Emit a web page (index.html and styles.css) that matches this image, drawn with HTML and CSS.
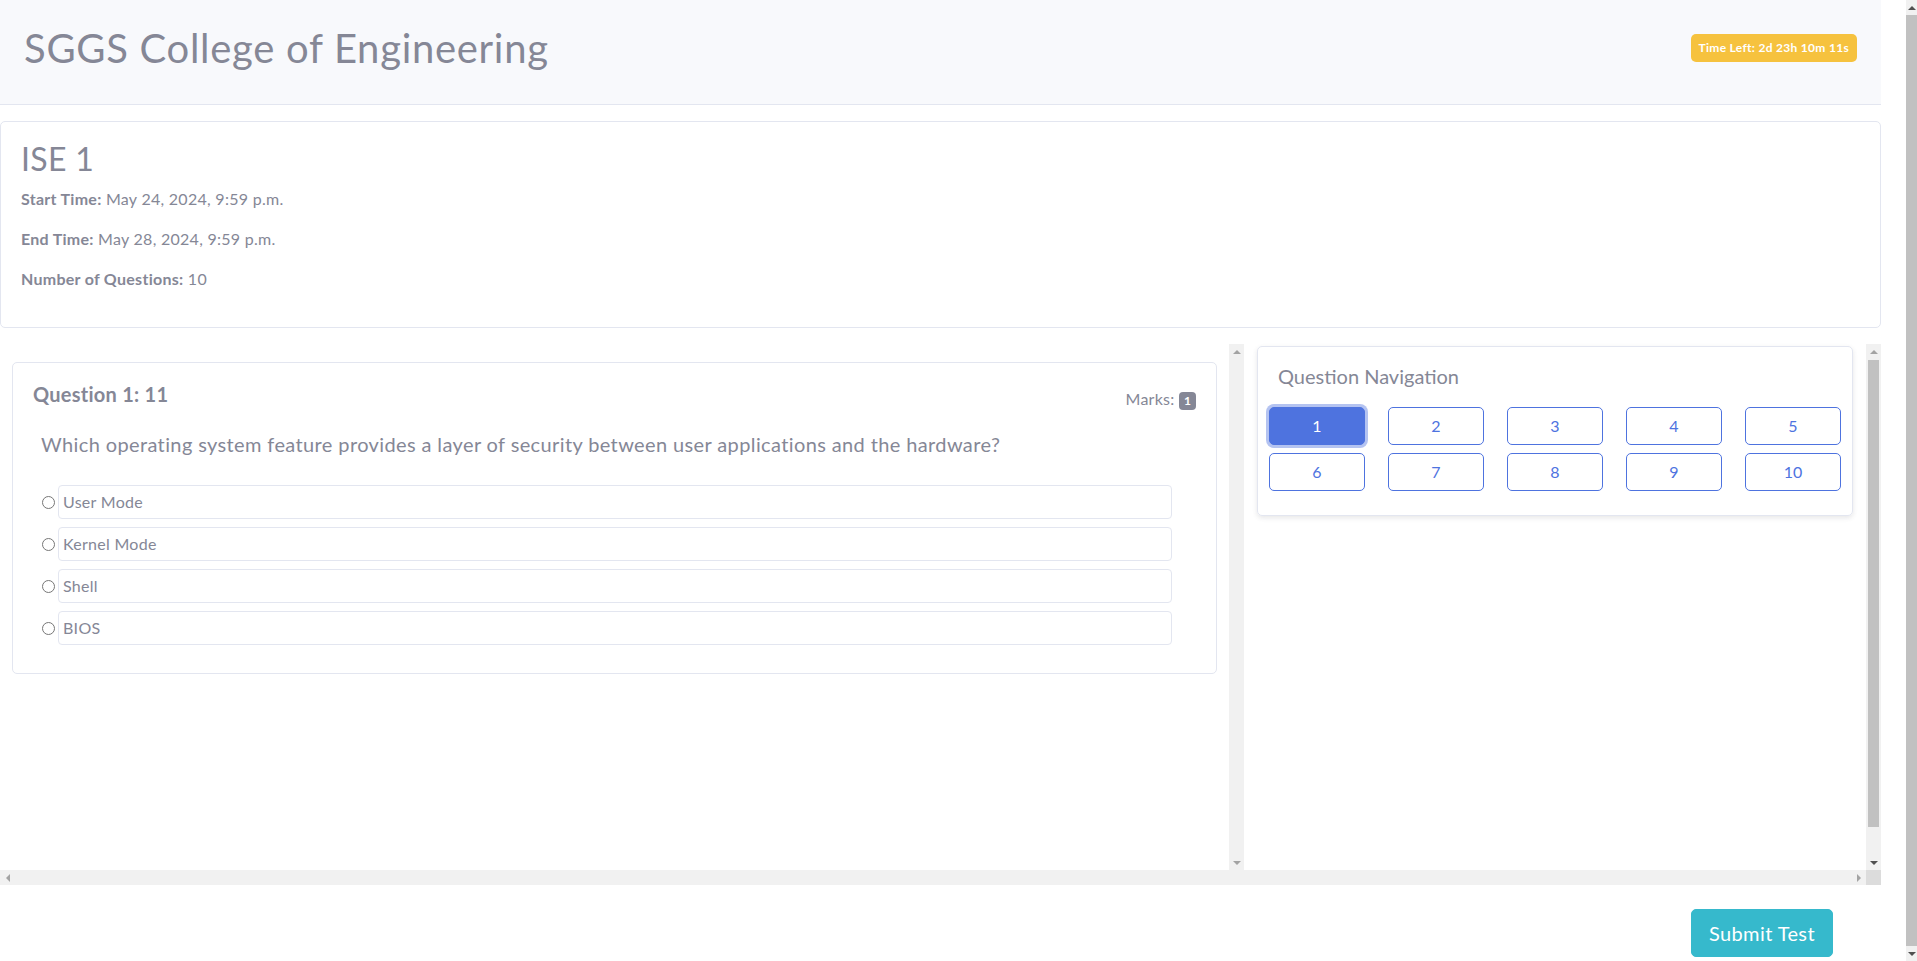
FILE: index.html
```html
<!DOCTYPE html>
<html lang="en">
<head>
<meta charset="utf-8">
<title>ISE 1 - SGGS College of Engineering</title>
<link rel="stylesheet" href="styles.css">
</head>
<body>
<div class="page">
  <header class="topbar">
    <h1 class="brand">SGGS College of Engineering</h1>
    <span class="timer">Time Left: 2d 23h 10m 11s</span>
  </header>

  <section class="info-card">
    <h2 class="test-title">ISE 1</h2>
    <p class="info-line"><strong>Start Time:</strong> May 24, 2024, 9:59 p.m.</p>
    <p class="info-line"><strong>End Time:</strong> May 28, 2024, 9:59 p.m.</p>
    <p class="info-line"><strong>Number of Questions:</strong> 10</p>
  </section>

  <div class="test-area">
    <div class="test-row">
      <div class="questions-col">
        <div class="questions-body">
          <div class="question-card">
            <div class="q-head">
              <h5 class="q-title">Question 1: 11</h5>
              <span class="marks">Marks: <span class="badge">1</span></span>
            </div>
            <p class="q-text">Which operating system feature provides a layer of security between user applications and the hardware?</p>
            <label class="option"><input class="option-radio" type="radio" name="q1"><span class="option-box">User Mode</span></label>
            <label class="option"><input class="option-radio" type="radio" name="q1"><span class="option-box">Kernel Mode</span></label>
            <label class="option"><input class="option-radio" type="radio" name="q1"><span class="option-box">Shell</span></label>
            <label class="option"><input class="option-radio" type="radio" name="q1"><span class="option-box">BIOS</span></label>
          </div>
        </div>
        <div class="vscroll">
          <span class="sb-arrow sb-up"></span>
          <span class="sb-track"></span>
          <span class="sb-arrow sb-down"></span>
        </div>
      </div>

      <div class="nav-col">
        <div class="nav-card">
          <h5 class="nav-title">Question Navigation</h5>
          <div class="nav-grid">
            <button class="nav-btn active">1</button>
            <button class="nav-btn">2</button>
            <button class="nav-btn">3</button>
            <button class="nav-btn">4</button>
            <button class="nav-btn">5</button>
            <button class="nav-btn">6</button>
            <button class="nav-btn">7</button>
            <button class="nav-btn">8</button>
            <button class="nav-btn">9</button>
            <button class="nav-btn">10</button>
          </div>
        </div>
      </div>

      <div class="vscroll">
        <span class="sb-arrow sb-up"></span>
        <span class="sb-track"><span class="sb-thumb sb-thumb-v"></span></span>
        <span class="sb-arrow sb-down sb-active"></span>
      </div>
    </div>

    <div class="hscroll-row">
      <div class="hscroll">
        <span class="sb-arrow sb-left"></span>
        <span class="sb-track"></span>
        <span class="sb-arrow sb-right"></span>
      </div>
      <span class="sb-corner"></span>
    </div>
  </div>

  <div class="submit-row">
    <button class="submit-btn">Submit Test</button>
  </div>
</div>

<div class="page-scroll">
  <span class="sb-arrow sb-up sb-active"></span>
  <span class="page-thumb"></span>
  <span class="sb-arrow sb-down sb-active"></span>
</div>
</body>
</html>
```

FILE: styles.css
```css
html, body {
  margin: 0;
  padding: 0;
}

body {
  display: flex;
  align-items: flex-start;
  width: 1917px;
  height: 961px;
  overflow: hidden;
  font-family: Lato, "Liberation Sans", sans-serif;
  font-size: 16px;
  line-height: 1.5;
  color: #858796;
  background: #fff;
  letter-spacing: 0.28px;
}

.page {
  flex: 0 0 1881px;
  width: 1881px;
}

/* Header */
.topbar {
  box-sizing: border-box;
  height: 105px;
  display: flex;
  align-items: center;
  justify-content: space-between;
  padding: 23px 24px 32px 24px;
  background: #f8f9fc;
  border-bottom: 1px solid #e3e6f0;
}

.brand {
  margin: 0;
  font-size: 40px;
  font-weight: 400;
  line-height: 48px;
  letter-spacing: 0.7px;
  color: #858796;
}

.timer {
  display: inline-block;
  padding: 7px 8px;
  font-size: 12px;
  font-weight: 700;
  line-height: 14px;
  letter-spacing: 0.3px;
  color: #fff;
  background: #f6c23e;
  border-radius: 5px;
}

/* Info card */
.info-card {
  margin-top: 16px;
  padding: 18px 20px 20px 20px;
  border: 1px solid #e3e6f0;
  border-radius: 5px;
}

.test-title {
  margin: 0 0 9px 0;
  font-size: 32px;
  font-weight: 400;
  line-height: 38px;
  letter-spacing: 0.3px;
}

.info-line {
  margin: 0 0 16px 0;
  line-height: 24px;
}

.info-line strong {
  font-weight: 700;
}

/* Scrolling test area */
.test-area {
  margin-top: 16px;
  height: 541px;
  display: flex;
  flex-direction: column;
}

.test-row {
  display: flex;
  height: 526px;
}

.questions-col {
  flex: 0 0 1244px;
  display: flex;
}

.questions-body {
  box-sizing: border-box;
  flex: 0 0 1229px;
  padding: 18px 12px 0 12px;
}

.question-card {
  padding: 19px 20px 20px 20px;
  border: 1px solid #e3e6f0;
  border-radius: 5px;
}

.q-head {
  display: flex;
  align-items: center;
  justify-content: space-between;
  padding-bottom: 1px;
}

.q-title {
  margin: 0 0 8px 0;
  font-size: 20px;
  font-weight: 700;
  line-height: 24px;
  letter-spacing: 0.25px;
}

.marks {
  font-size: 16px;
  line-height: 24px;
  padding-top: 2px;
}

.badge {
  display: inline-block;
  min-width: 7px;
  padding: 2px 5px;
  font-size: 12px;
  font-weight: 700;
  line-height: 14px;
  text-align: center;
  color: #fff;
  background: #858796;
  border-radius: 4px;
  vertical-align: 0;
  letter-spacing: 0;
}

.q-text {
  margin: 14px 0 26px 8px;
  font-size: 20px;
  font-weight: 400;
  line-height: 30px;
  letter-spacing: 0.38px;
}

.option {
  display: flex;
  align-items: center;
  margin: 0 24px 8px 8px;
}

.option-radio {
  width: 13px;
  height: 13px;
  margin: 0 3px 0 1px;
  flex: 0 0 auto;
}

.option-box {
  box-sizing: border-box;
  flex: 1;
  height: 34px;
  padding: 0 4px;
  line-height: 32px;
  border: 1px solid #e3e6f0;
  border-radius: 4px;
}

/* Navigation */
.nav-col {
  box-sizing: border-box;
  flex: 1;
  padding: 2px 13px 0 13px;
}

.nav-card {
  padding: 17px 11px 24px 11px;
  border: 1px solid #e3e6f0;
  border-radius: 5px;
  box-shadow: 0 2px 5px rgba(58, 59, 69, 0.12);
}

.nav-title {
  margin: 0 0 19px 9px;
  font-size: 20px;
  font-weight: 400;
  line-height: 24px;
  letter-spacing: 0;
}

.nav-grid {
  display: grid;
  grid-template-columns: repeat(5, 96px);
  column-gap: 23px;
  row-gap: 8px;
}

.nav-btn {
  height: 38px;
  padding: 0;
  font-family: inherit;
  font-size: 16px;
  line-height: 24px;
  color: #4e73df;
  background: #fff;
  border: 1px solid #4e73df;
  border-radius: 5px;
}

.nav-btn.active {
  color: #fff;
  background: #4e73df;
  box-shadow: 0 0 0 3px rgba(105, 136, 228, 0.5);
}

/* Drawn scrollbars (classic style) */
.vscroll {
  flex: 0 0 15px;
  display: flex;
  flex-direction: column;
  background: #f1f1f1;
}

.hscroll-row {
  display: flex;
  height: 15px;
}

.hscroll {
  flex: 1;
  display: flex;
  background: #f1f1f1;
}

.sb-corner {
  flex: 0 0 15px;
  background: #dcdcdc;
}

.sb-track {
  flex: 1;
  display: flex;
  flex-direction: column;
}

.sb-arrow {
  flex: 0 0 15px;
  width: 15px;
  height: 15px;
  display: flex;
  align-items: center;
  justify-content: center;
}

.sb-arrow::before {
  content: "";
  width: 0;
  height: 0;
  border-style: solid;
  border-color: transparent;
}

.sb-up::before {
  border-width: 0 4px 4px 4px;
  border-bottom-color: #a3a3a3;
}

.sb-down::before {
  border-width: 4px 4px 0 4px;
  border-top-color: #a3a3a3;
}

.sb-left::before {
  border-width: 4px 4px 4px 0;
  border-right-color: #a3a3a3;
}

.sb-right::before {
  border-width: 4px 0 4px 4px;
  border-left-color: #a3a3a3;
}

.sb-up.sb-active::before {
  border-bottom-color: #505050;
}

.sb-down.sb-active::before {
  border-top-color: #505050;
}

.sb-thumb {
  background: #c1c1c1;
}

.sb-thumb-v {
  height: 467px;
  margin: 1px 2px 0 2px;
}

/* Submit */
.submit-row {
  display: flex;
  justify-content: flex-end;
  margin-top: 24px;
  padding: 0 48px 0 0;
}

.submit-btn {
  height: 48px;
  padding: 0 17px;
  font-family: inherit;
  font-size: 20px;
  line-height: 30px;
  letter-spacing: 0.4px;
  color: #fff;
  background: #36b9cc;
  border: 1px solid #36b9cc;
  border-radius: 5px;
}

/* Page scrollbar */
.page-scroll {
  margin-left: auto;
  flex: 0 0 11px;
  height: 961px;
  display: flex;
  flex-direction: column;
  background: #f1f1f1;
}

.page-scroll .sb-arrow {
  width: 11px;
}

.page-thumb {
  flex: 1;
  background: #c1c1c1;
}
```
